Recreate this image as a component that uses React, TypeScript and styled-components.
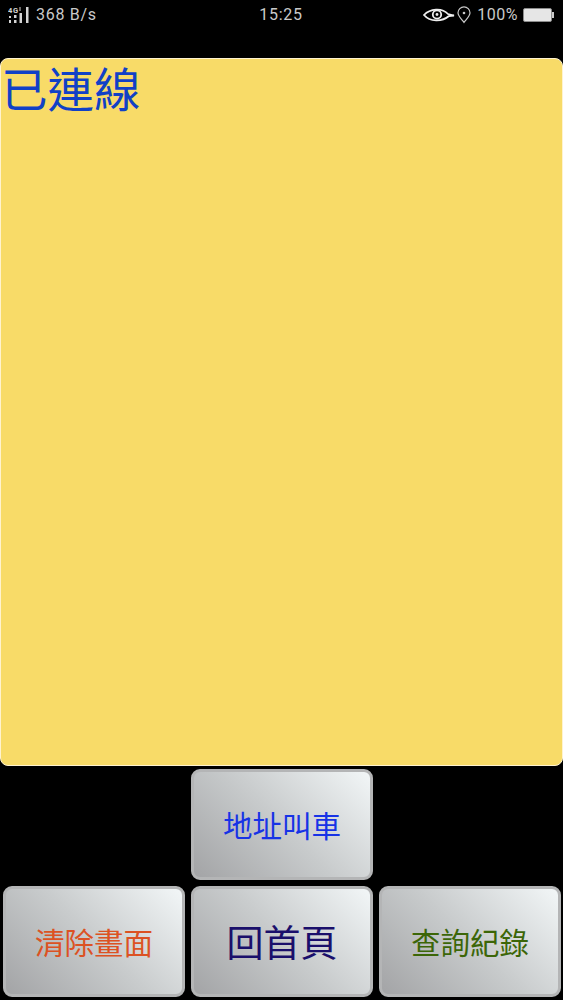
import React from "react";
import styled, { createGlobalStyle } from "styled-components";

const GlobalStyle = createGlobalStyle`
  html, body {
    margin: 0;
    padding: 0;
    background: #000;
  }
`;

const Page = styled.div`
  width: 563px;
  height: 1000px;
  overflow: hidden;
  background: #000;
  display: flex;
  flex-direction: column;
  font-family: "Noto Sans CJK TC", "Noto Sans CJK SC", sans-serif;
`;

const StatusBar = styled.div`
  height: 29px;
  margin-bottom: 29px;
  flex-shrink: 0;
  display: grid;
  grid-template-columns: 1fr auto 1fr;
  align-items: center;
  padding: 0 9px 0 8px;
  color: #c9c9c9;
  font-family: Roboto, "Liberation Sans", sans-serif;
  font-size: 16px;
  letter-spacing: 0.7px;
`;

const StatusGroup = styled.div<{ $right?: boolean }>`
  display: flex;
  align-items: center;
  justify-content: ${(props) => (props.$right ? "flex-end" : "flex-start")};
`;

const Speed = styled.span`
  margin-left: 6px;
`;

const Percent = styled.span`
  margin: 0 5px 0 6px;
  letter-spacing: 0.5px;
`;

const Panel = styled.div`
  box-sizing: border-box;
  height: 708px;
  flex-shrink: 0;
  background: #f8db68;
  border: 1px solid #fff3cf;
  border-radius: 8px;
`;

const PanelText = styled.div`
  color: #1141c6;
  font-size: 46.5px;
  line-height: 56px;
`;

const ButtonGrid = styled.div`
  display: grid;
  grid-template-columns: repeat(3, 182px);
  grid-auto-rows: 111px;
  gap: 6px;
  padding: 3px 0 0 3px;
`;

const KeyButton = styled.button<{ $color: string; $size: number; $column: number }>`
  grid-column: ${(props) => props.$column};
  box-sizing: border-box;
  margin: 0;
  padding: 0;
  border: 3px solid #b4b5b6;
  border-radius: 9px;
  background: linear-gradient(45deg, #a3a4a6 0%, #c8cbcc 50%, #f2f6f7 100%);
  color: ${(props) => props.$color};
  font-family: inherit;
  font-size: ${(props) => props.$size}px;
  line-height: 1;
`;

function MobileSignal() {
  return (
    <svg width="22" height="18" viewBox="0 0 22 18" fill="#d4d4d4">
      <text x="0" y="7" fontSize="7.5" fontWeight="700" fontFamily="Roboto, sans-serif">
        4G
      </text>
      <rect x="1" y="10" width="2" height="2" />
      <rect x="1" y="14" width="2" height="3" />
      <rect x="6" y="9" width="2.5" height="3" />
      <rect x="6" y="14" width="2.5" height="3" />
      <rect x="11.5" y="1" width="1" height="4" />
      <rect x="11.5" y="7" width="2.5" height="10" />
      <rect x="18" y="1" width="2.5" height="16" />
    </svg>
  );
}

function EyeIcon() {
  return (
    <svg width="32" height="16" viewBox="0 0 32 16">
      <path
        d="M1 8 C7 1.5 19 0.5 25 7 L31 8.5 L26 9 C19 15 7 15 1 8 Z"
        fill="none"
        stroke="#eee"
        strokeWidth="1.8"
      />
      <circle cx="14" cy="7.5" r="4.2" fill="none" stroke="#eee" strokeWidth="1.8" />
      <circle cx="14" cy="7.5" r="1.4" fill="#eee" />
    </svg>
  );
}

function LocationIcon() {
  return (
    <svg width="14" height="18" viewBox="0 0 14 18" style={{ marginLeft: 2 }}>
      <path
        d="M7 16.5 C4 12.5 1 10 1 6.8 A6 6 0 0 1 13 6.8 C13 10 10 12.5 7 16.5 Z"
        fill="none"
        stroke="#c9c9c9"
        strokeWidth="1.2"
      />
      <circle cx="7" cy="7" r="1.3" fill="#c9c9c9" />
    </svg>
  );
}

function BatteryIcon() {
  return (
    <svg width="31" height="14" viewBox="0 0 31 14">
      <rect x="0.5" y="0.5" width="28" height="13" rx="1.5" fill="#e6e6e6" stroke="#8c8c8c" />
      <rect x="29" y="4" width="2" height="6" fill="#c9c9c9" />
    </svg>
  );
}

export default function App() {
  return (
    <Page>
      <GlobalStyle />
      <StatusBar>
        <StatusGroup>
          <MobileSignal />
          <Speed>368 B/s</Speed>
        </StatusGroup>
        <span>15:25</span>
        <StatusGroup $right>
          <EyeIcon />
          <LocationIcon />
          <Percent>100%</Percent>
          <BatteryIcon />
        </StatusGroup>
      </StatusBar>
      <Panel>
        <PanelText>已連線</PanelText>
      </Panel>
      <ButtonGrid>
        <KeyButton $color="#1733e6" $size={29.5} $column={2}>
          地址叫車
        </KeyButton>
        <KeyButton $color="#dc5223" $size={29.5} $column={1}>
          清除畫面
        </KeyButton>
        <KeyButton $color="#1a0f6b" $size={37} $column={2}>
          回首頁
        </KeyButton>
        <KeyButton $color="#3c6608" $size={29.5} $column={3}>
          查詢紀錄
        </KeyButton>
      </ButtonGrid>
    </Page>
  );
}
